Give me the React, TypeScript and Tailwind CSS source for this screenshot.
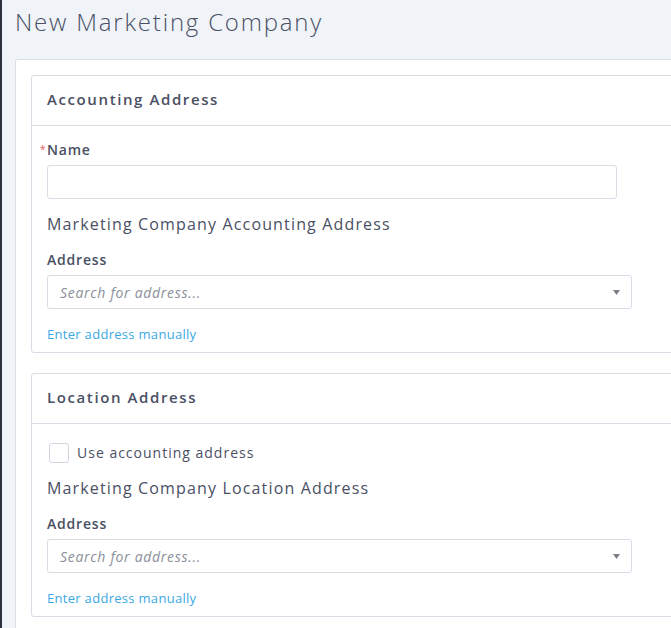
const Field = ({ label, required }: { label: string; required?: boolean }) => (
  <div className="relative text-[14px] font-semibold leading-[20px] tracking-[0.8px] text-[#4a5064]">
    {required && (
      <span className="absolute -left-[7px] top-[-1px] text-[10px] font-normal text-[#e25555]">*</span>
    )}
    {label}
  </div>
);

const AddressSearch = () => (
  <div className="mt-[5px] flex h-[34px] w-[585px] items-center justify-between rounded-[3px] border border-[#d8dde6] bg-white pl-[12px] pr-[10px]">
    <span className="text-[14px] italic tracking-[0.7px] text-[#8a909b]">Search for address...</span>
    <svg width="7" height="5" viewBox="0 0 7 5" className="mr-[1px]">
      <path d="M0 0 H7 L3.5 5 Z" fill="#7a7f89" />
    </svg>
  </div>
);

const Card = ({ title, children }: { title: string; children: React.ReactNode }) => (
  <div className="rounded-[3px] border border-[#d8dde6] bg-white">
    <div className="flex h-[50px] items-center border-b border-[#d8dde6] px-[15px] pb-[2px] text-[15px] font-semibold tracking-[1.6px] text-[#4a5064]">
      {title}
    </div>
    <div className="px-[15px]">{children}</div>
  </div>
);

const ManualLink = () => (
  <div className="mt-[16px] text-[13px] leading-[18px] tracking-[0.3px] text-[#3aa9e4]">Enter address manually</div>
);

export default function App() {
  return (
    <div
      className="flex h-screen w-screen overflow-hidden bg-[#f0f3f8]"
      style={{ fontFamily: '"Open Sans", Lato, sans-serif' }}
    >
      <div className="w-[2px] shrink-0 bg-[#2b303b]" />
      <div className="flex-1 pl-[13px]">
        <h1 className="h-[59px] pt-[6px] text-[24px] font-light leading-[32px] tracking-[1.8px] text-[#4a5166]">
          New Marketing Company
        </h1>
        <div className="w-[720px] rounded-tl-[3px] border border-[#d8dde6] bg-white pl-[15px] pt-[15px] pb-[40px]">
          <div className="flex flex-col gap-[20px]">
            <Card title="Accounting Address">
              <div className="pt-[14px] pb-[9px]">
                <Field label="Name" required />
                <div className="mt-[5px] h-[34px] w-[570px] rounded-[3px] border border-[#d8dde6]" />
                <div className="mt-[13px] text-[16px] leading-[24px] tracking-[1.15px] text-[#4a5064]">
                  Marketing Company Accounting Address
                </div>
                <div className="mt-[14px]">
                  <Field label="Address" />
                </div>
                <AddressSearch />
                <ManualLink />
              </div>
            </Card>
            <Card title="Location Address">
              <div className="pt-[18px] pb-[9px]">
                <div className="flex items-center gap-[8px] pl-[2px]">
                  <div className="h-[20px] w-[20px] rounded-[3px] border border-[#d0d5de] bg-white" />
                  <span className="text-[14px] tracking-[1px] text-[#4a5064]">Use accounting address</span>
                </div>
                <div className="mt-[13px] text-[16px] leading-[24px] tracking-[1.15px] text-[#4a5064]">
                  Marketing Company Location Address
                </div>
                <div className="mt-[14px]">
                  <Field label="Address" />
                </div>
                <AddressSearch />
                <ManualLink />
              </div>
            </Card>
          </div>
        </div>
      </div>
    </div>
  );
}
